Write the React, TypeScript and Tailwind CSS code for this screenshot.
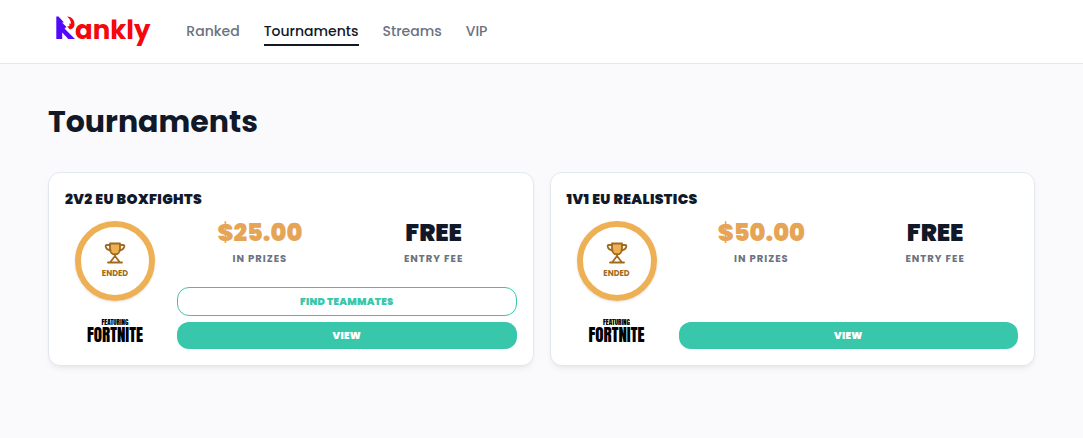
import React from "react";

type Tournament = {
  id: number;
  title: string;
  prize: string;
  entry: string;
  teams: boolean;
};

const links = ["Ranked", "Tournaments", "Streams", "VIP"];

const tournaments: Tournament[] = [
  { id: 1, title: "2V2 EU BOXFIGHTS", prize: "$25.00", entry: "FREE", teams: true },
  { id: 2, title: "1V1 EU REALISTICS", prize: "$50.00", entry: "FREE", teams: false },
];

function Logo() {
  return (
    <a href="#" aria-label="Rankly" className="flex items-baseline pb-0.5">
      <svg width="19" height="23" viewBox="0 0 19 23" aria-hidden="true">
        <path d="M0.300 0.500H2.500L8 6.500H6L10.500 11L8.500 12.500L19 23H12.300L6.200 16.500V23H0.300Z" fill="#5208fb" />
        <path d="M11 0.500C15.500 0.500 18.500 4 18.500 8C18.500 11 17 13 14 13.500L11 10.500C13 11 14.500 9.500 13 7.500L15 7.800C15 5 13.500 2.500 11 0.500Z" fill="#f5070c" />
      </svg>
      <span className="text-[26px] leading-8 font-bold text-[#f5070c]">ankly</span>
    </a>
  );
}

function Navbar() {
  return (
    <header className="flex h-16 items-center border-b border-[#e2e8f0] bg-white px-14 pb-px">
      <Logo />
      <nav className="ml-9 flex gap-6 text-sm leading-[26px] font-medium">
        {links.map((link) => (
          <a
            key={link}
            href="#"
            className={
              link === "Tournaments"
                ? "border-b-2 border-[#111827] pt-0.5 text-[#111827]"
                : "border-b-2 border-transparent pt-0.5 text-[#6b7280]"
            }
          >
            {link}
          </a>
        ))}
      </nav>
    </header>
  );
}

function TrophyIcon() {
  return (
    <svg width="22" height="22" viewBox="0 0 22 22" fill="none" stroke="#a16a1c" strokeWidth="1.8" strokeLinecap="round" strokeLinejoin="round" aria-hidden="true">
      <path d="M6 1.500H16V7C16 10 14 12.500 11 12.500S6 10 6 7Z" fill="#edb055" />
      <path d="M6 3H3C1.500 3 1.500 4 1.800 5C2.300 7 4 8 6.500 8.500M16 3H19C20.500 3 20.500 4 20.200 5C19.700 7 18 8 15.500 8.500" />
      <path d="M11 12.500V14L6 20.500M11 14L16 20.500M4 20.500H18" />
    </svg>
  );
}

function GameLogo() {
  return (
    <div className="flex flex-col items-center font-['Anton','Liberation_Sans_Narrow',sans-serif] text-black">
      <span className="text-[7px] leading-[6px]">FEATURING</span>
      <span className="text-[17px] leading-5">FORTNITE</span>
    </div>
  );
}

function Stat({ value, label, color }: { value: string; label: string; color: string }) {
  return (
    <div className="text-center">
      <p className={`text-2xl leading-6 font-black ${color}`}>{value}</p>
      <p className="mt-1.5 text-[10px] leading-4 font-bold tracking-widest text-[#6b7280]">{label}</p>
    </div>
  );
}

function TournamentCard({ item }: { item: Tournament }) {
  return (
    <article className="rounded-xl border border-[#e2e8f0] bg-white p-4 shadow-md shadow-black/5">
      <h2 className="mb-3 text-sm leading-5 font-black tracking-wide text-[#111827]">{item.title}</h2>
      <div className="flex gap-3">
        <div className="flex w-[100px] flex-col items-center">
          <div className="flex size-20 flex-col items-center justify-center rounded-full border-6 border-[#edb055] text-[#a16a1c] shadow-sm">
            <TrophyIcon />
            <span className="mt-1 text-[8px] leading-3 font-bold">ENDED</span>
          </div>
          <div className="mt-[18px]">
            <GameLogo />
          </div>
        </div>
        <div className="flex min-h-32 flex-1 flex-col justify-between">
          <div className="grid grid-cols-2 gap-2">
            <Stat value={item.prize} label="IN PRIZES" color="text-[#e6a456]" />
            <Stat value={item.entry} label="ENTRY FEE" color="text-[#111827]" />
          </div>
          <div className="flex flex-col gap-1.5 text-[10px] font-black tracking-wide">
            {item.teams && (
              <button type="button" className="h-[29px] rounded-xl border border-[#38c7aa] text-[#38c7aa]">
                FIND TEAMMATES
              </button>
            )}
            <button type="button" className="h-[27px] rounded-xl bg-[#38c7aa] text-white">
              VIEW
            </button>
          </div>
        </div>
      </div>
    </article>
  );
}

export default function App() {
  return (
    <div className="min-h-screen bg-[#fafafc] font-['Poppins','Inter',sans-serif]">
      <Navbar />
      <main className="px-12 py-10">
        <h1 className="mb-8 text-3xl leading-9 font-bold text-[#111827]">Tournaments</h1>
        <div className="grid grid-cols-2 gap-4">
          {tournaments.map((item) => (
            <TournamentCard key={item.id} item={item} />
          ))}
        </div>
      </main>
    </div>
  );
}
